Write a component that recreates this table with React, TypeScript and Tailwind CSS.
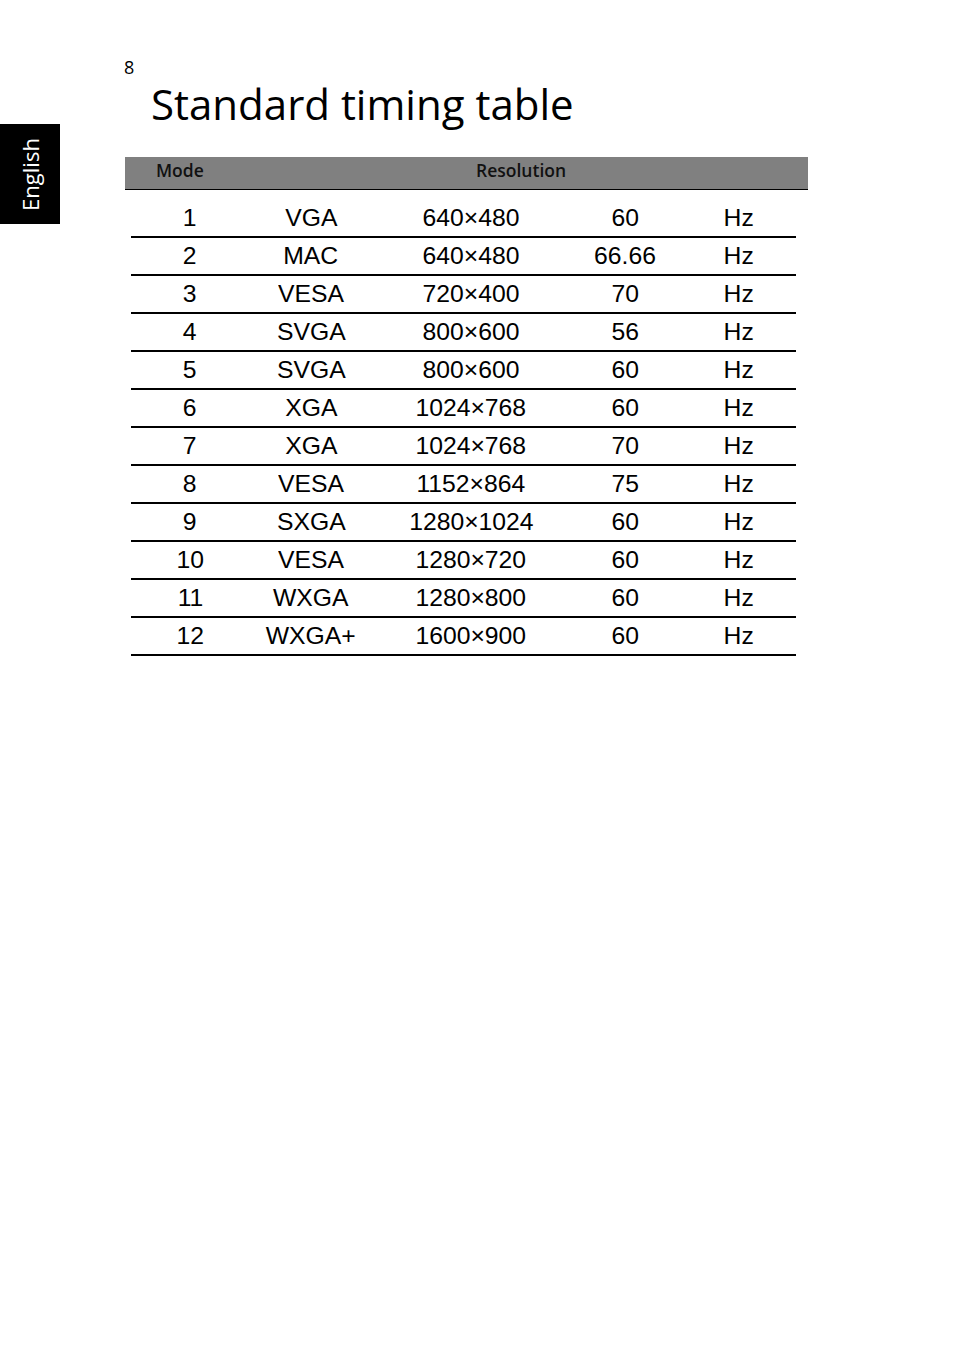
const rows: [string, string, string, string][] = [
  ["1", "VGA", "640×480", "60"],
  ["2", "MAC", "640×480", "66.66"],
  ["3", "VESA", "720×400", "70"],
  ["4", "SVGA", "800×600", "56"],
  ["5", "SVGA", "800×600", "60"],
  ["6", "XGA", "1024×768", "60"],
  ["7", "XGA", "1024×768", "70"],
  ["8", "VESA", "1152×864", "75"],
  ["9", "SXGA", "1280×1024", "60"],
  ["10", "VESA", "1280×720", "60"],
  ["11", "WXGA", "1280×800", "60"],
  ["12", "WXGA+", "1600×900", "60"],
];

function Cell({ children }: { children: string }) {
  return (
    <div className="flex items-center justify-center">
      <span className="inline-block scale-x-[1.03] whitespace-nowrap">{children}</span>
    </div>
  );
}

export default function App() {
  return (
    <div className="flex min-h-[1369px] bg-white text-black">
      {/* side language tab */}
      <div className="w-[60px] shrink-0 pt-[124px]">
        <div className="flex h-[100px] w-[60px] items-center justify-center bg-black">
          <span className="block -rotate-90 whitespace-nowrap font-['Open_Sans',sans-serif] text-[22px] text-white">
            English
          </span>
        </div>
      </div>

      <div className="ml-[64px] pt-[56px]">
        <div className="font-['Open_Sans',sans-serif] text-[18px] leading-[22px]">8</div>
        <h1 className="pl-[27px] font-['Open_Sans',sans-serif] text-[42px] leading-[52px]">
          Standard timing table
        </h1>

        <div className="mt-[27px] ml-px flex h-[33px] w-[683px] items-center border-b border-black bg-[#808080] pb-[5px] pl-[31px] font-['Open_Sans',sans-serif] text-[17.5px] font-semibold text-[#111]">
          <span className="w-[320px]">Mode</span>
          <span>Resolution</span>
        </div>

        <div className="mt-[10px] ml-[7px] w-[665px] font-['Liberation_Sans',Arial,sans-serif] text-[24px]">
          {rows.map((r) => (
            <div
              key={r[0]}
              className="grid h-[38px] grid-cols-[118px_124px_196px_112px_115px] border-b-2 border-black"
            >
              <Cell>{r[0]}</Cell>
              <Cell>{r[1]}</Cell>
              <Cell>{r[2]}</Cell>
              <Cell>{r[3]}</Cell>
              <Cell>Hz</Cell>
            </div>
          ))}
        </div>
      </div>
    </div>
  );
}
